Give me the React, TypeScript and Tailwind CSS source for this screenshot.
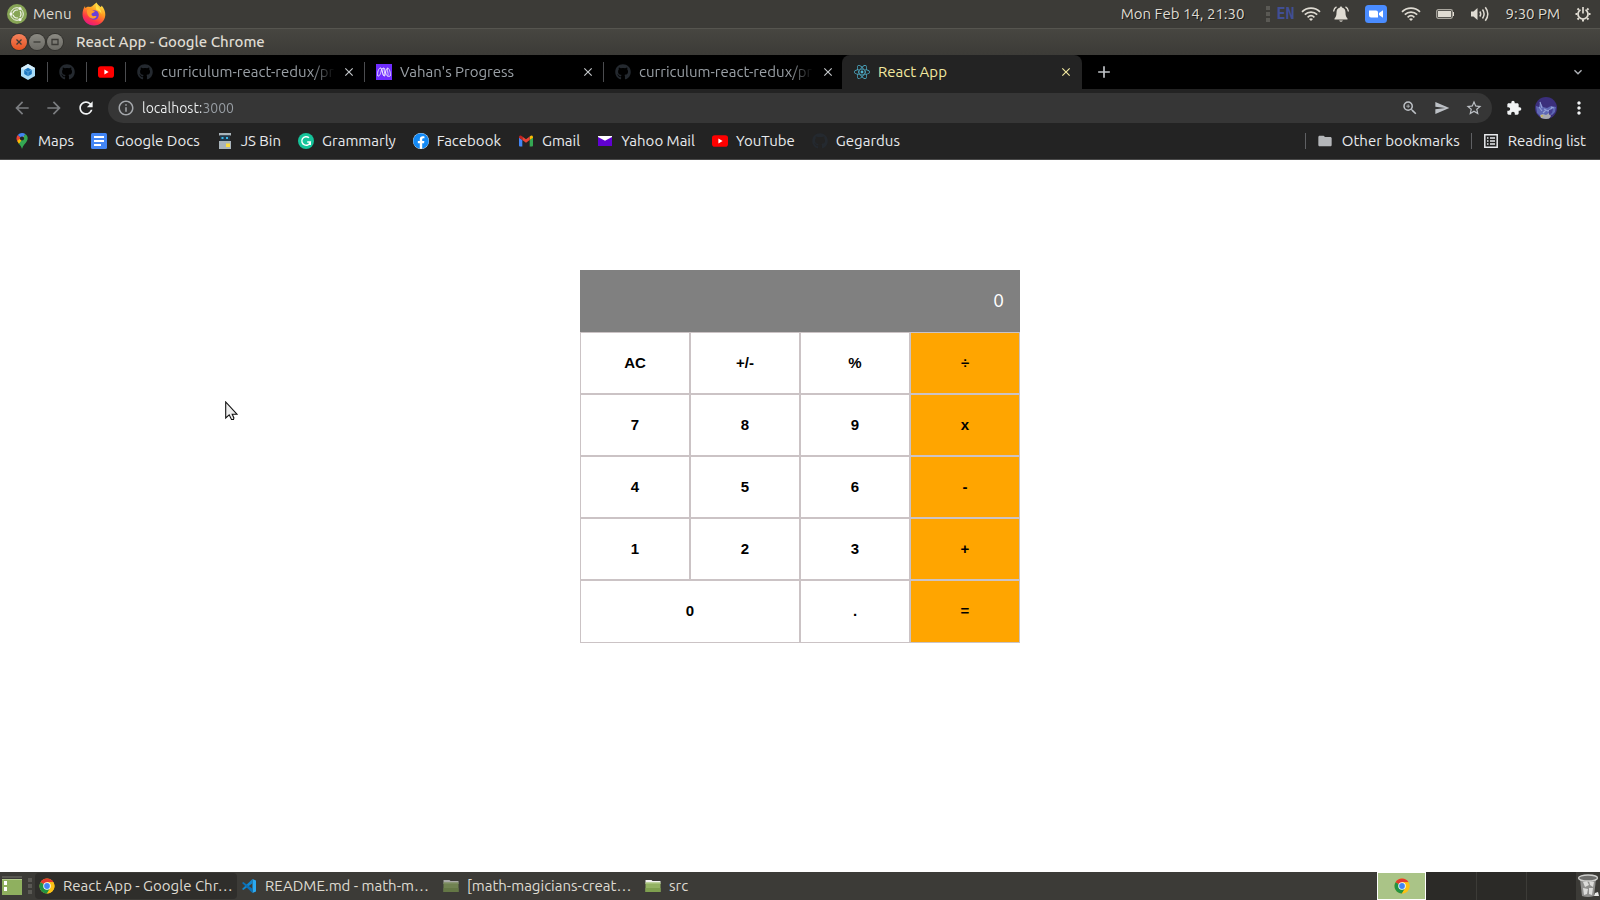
import React from 'react';
import { FaGithub, FaReact, FaFacebook } from 'react-icons/fa';
import {
  MdArrowBack, MdArrowForward, MdRefresh, MdInfoOutline, MdZoomIn, MdSend,
  MdStarBorder, MdExtension, MdMoreVert, MdFolder, MdClose, MdAdd, MdExpandMore,
} from 'react-icons/md';

const shadow = '[text-shadow:1px_1px_0_rgba(0,0,0,0.6)]';

/* ---------- icons ---------- */

function UbuntuLogo() {
  return (
    <svg viewBox="0 0 20 20" className="size-5 shrink-0">
      <circle cx="10" cy="10" r="10" fill="#87a556" />
      <circle cx="10" cy="10" r="6.3" fill="none" stroke="#f4f6ee" strokeWidth="1" />
      <circle cx="10" cy="10" r="4" fill="none" stroke="#f4f6ee" strokeWidth="1.2" />
      <g stroke="#87a556" strokeWidth="1.6">
        <path d="M10 10H2M10 10l4-7M10 10l4 7" />
      </g>
      <g fill="#f4f6ee">
        <circle cx="4" cy="10" r="1.5" />
        <circle cx="13" cy="4.6" r="1.5" />
        <circle cx="13" cy="15.4" r="1.5" />
      </g>
    </svg>
  );
}

function FirefoxLogo() {
  return (
    <svg viewBox="0 0 24 24" className="size-6 shrink-0">
      <defs>
        <linearGradient id="ff" x1="0.8" y1="0" x2="0.3" y2="1">
          <stop offset="0" stopColor="#fff44f" />
          <stop offset="0.4" stopColor="#ff9a1f" />
          <stop offset="0.75" stopColor="#ff3647" />
          <stop offset="1" stopColor="#e31587" />
        </linearGradient>
      </defs>
      <path d="M14.5 0.5c.5 2 3 3 4 4.500c1-.3 1-1 1-1.500c2.500 2.500 4 6 3.800 9.500C23 19 18 23.500 12 23.500S.5 19 .5 12.500C.5 9 1.500 6 3 4c0 1 .2 1.500.5 2C5 4.500 6.500 4.500 8 5c2.500-.2 3-2 6.500-4.500z" fill="url(#ff)" />
      <circle cx="12" cy="13" r="4.800" fill="#6a3fd8" />
      <path d="M5 8c2-1.500 4-1.200 5.500.2L13 9.500c-1 1.500-3 1-3.500 2.500-.2 1.500 1.500 2.500 3 2 1-.3 2.500 0 2 .8-1.500 2.500-5 2.500-7 .5C5.500 13.500 4.500 10.500 5 8z" fill="#ff9a2a" />
      <path d="M15 2c0 3 4.500 4.500 4.500 10-1-2-2.500-3.500-5-4-1-2-.8-4 .5-6z" fill="#ffe14a" />
    </svg>
  );
}

function WindowButton({ kind }: { kind: 'close' | 'min' | 'max' }) {
  const tone = kind === 'close' ? 'from-[#f4825c] to-[#e4531f]' : 'from-[#8b8a83] to-[#6c6b65]';
  return (
    <button type="button" aria-label={kind} className={`grid size-4 place-items-center rounded-full bg-linear-to-b shadow-[0_0_0_1px_#33322e] ${tone}`}>
      <svg viewBox="0 0 16 16" className="size-4" fill="none" stroke="#3c3b37" strokeWidth="1.3">
        {kind === 'close' && <path d="M5.500 5.500l5 5M10.500 5.500l-5 5" />}
        {kind === 'min' && <path d="M4.500 8h7" />}
        {kind === 'max' && <path d="M5 5.500h6v5h-6z" />}
      </svg>
    </button>
  );
}

function WebpackLogo() {
  return (
    <svg viewBox="0 0 16 16" className="size-4 shrink-0">
      <path d="M8 0l7 4v8l-7 4-7-4V4z" fill="#a9dcf7" />
      <path d="M8 0l7 4-7 4-7-4z" fill="#d5eefb" />
      <path d="M8 3.800l3.800 2.100v4.200L8 12.200l-3.800-2.100V5.900z" fill="#1d78c1" />
      <path d="M4.200 5.900L8 8l3.800-2.100M8 8v4.200" stroke="#7fc0ea" strokeWidth=".6" fill="none" />
    </svg>
  );
}

function MicroverseLogo() {
  return (
    <svg viewBox="0 0 16 16" className="size-4 shrink-0">
      <path d="M0 0h16v16H0z" fill="#6f2cff" />
      <path
        d="M1.800 12C1 9 2.500 4 4.500 4S6.500 12 8.300 12 7 4 8 4 9.800 12 11.500 12 10.500 4 11.800 4 15 9 14.200 12M1.800 12C3.500 12.500 4.500 10 5 7.500S6.500 4 8 4M8.300 12C6.500 12 6 4 4.500 4M8.300 12C9.500 11 9.800 4 11.800 4M11.500 12C12.300 12.600 13.800 12.500 14.200 12"
        fill="none"
        stroke="#eee6ff"
        strokeWidth=".9"
      />
    </svg>
  );
}

function YoutubeLogo() {
  return (
    <svg viewBox="0 0 16 16" className="size-4 shrink-0">
      <rect x="0" y="2.300" width="16" height="11.400" rx="2.800" fill="#f00" />
      <path d="M6.400 5.600L10.600 8l-4.200 2.400z" fill="#fff" />
    </svg>
  );
}

function MapsLogo() {
  return (
    <svg viewBox="0 0 16 16" className="size-4 shrink-0">
      <path d="M3.800 2A5.500 5.500 0 0 0 3.400 8.400L8 5.700z" fill="#ea4335" />
      <path d="M3.200 8l7-6 .5 4L5 11z" fill="#fbbc04" />
      <path d="M11.300 1a5.500 5.500 0 0 1 1.500 7.200C11.500 10.500 9 12 8 16c-.7-2.500-1.800-3.700-3-5z" fill="#34a853" />
      <path d="M11.300 1A5.500 5.500 0 0 0 8 0a5.500 5.500 0 0 0-4.200 2L8 5.700z" fill="#4285f4" />
      <circle cx="8" cy="5.500" r="2.100" fill="#232323" />
    </svg>
  );
}

function DocsLogo() {
  return (
    <svg viewBox="0 0 16 16" className="size-4 shrink-0">
      <rect width="16" height="16" rx="1.500" fill="#4285f4" />
      <path d="M3 4h10M3 8h10M3 12h7" stroke="#fff" strokeWidth="1.800" />
    </svg>
  );
}

function JsBinLogo() {
  return (
    <svg viewBox="0 0 16 16" className="size-4 shrink-0">
      <path d="M2 0h12v2.500H2zM2 8h12v8H2z" fill="#a9b4bb" />
      <path d="M3 2.500h10v5.500H3z" fill="#20384a" />
      <path d="M4.500 4h2v2h-2zM9 4h2v2H9z" fill="#39b7ea" />
      <path d="M9 10.500h4V14H9z" fill="#fbdc3c" />
    </svg>
  );
}

function GrammarlyLogo() {
  return (
    <svg viewBox="0 0 16 16" className="size-4 shrink-0">
      <circle cx="8" cy="8" r="8" fill="#15c39a" />
      <path d="M11 4.800A4.300 4.300 0 1 0 12.300 9H9.200M12.300 9v3" fill="none" stroke="#fff" strokeWidth="1.400" />
    </svg>
  );
}

function FacebookLogo() {
  return (
    <span className="grid size-4 shrink-0 place-items-center rounded-full bg-white">
      <FaFacebook className="size-4 text-[#1289f5]" />
    </span>
  );
}

function GmailLogo() {
  return (
    <svg viewBox="0 0 16 16" className="size-4 shrink-0">
      <path d="M1 4.500v8q0 1 1 1h2.300V7z" fill="#4285f4" />
      <path d="M15 4.500v8q0 1-1 1h-2.300V7z" fill="#34a853" />
      <path d="M11.700 3.500V7L15 4.700V4q-.5-2-2.200-1.300z" fill="#fbbc04" />
      <path d="M4.300 7V3.500L8 6.300l3.700-2.800V7L8 9.800z" fill="#ea4335" />
      <path d="M1 4v.7L4.300 7V3.500l-1.100-.8Q1.500 2 1 4z" fill="#c5221f" />
    </svg>
  );
}

function YahooMailLogo() {
  return (
    <svg viewBox="0 0 16 16" className="size-4 shrink-0">
      <path d="M1 3h14v10H1z" fill="#6001d2" />
      <path d="M1 3h14v1L8 7.800 1 4z" fill="#fff" />
    </svg>
  );
}

function GithubDark() {
  return <FaGithub className="size-4 shrink-0 text-[#24292f]" />;
}

function ReadingListIcon() {
  return (
    <svg viewBox="0 0 16 16" className="size-4 shrink-0" fill="none" stroke="#e8eaed">
      <path d="M1.800 1.800h12.400v12.400H1.800z" strokeWidth="1.500" />
      <path d="M4 5h1.500M4 8h1.500M4 11h1.500M7 5h5M7 8h5M7 11h5" strokeWidth="1.500" />
    </svg>
  );
}

function ChromeLogo() {
  return (
    <svg viewBox="0 0 16 16" className="size-4 shrink-0">
      <circle cx="8" cy="8" r="7.500" fill="#fbc116" />
      <path d="M8 8L1.500 4.250A7.500 7.500 0 0 1 14.500 4.250H8z" fill="#e33b2e" />
      <path d="M1.500 4.250A7.500 7.500 0 0 0 8 15.500L11.250 9.900 8 8z" fill="#229342" />
      <path d="M8 4.250h6.500A7.500 7.500 0 0 1 8 15.500l3.250-5.600z" fill="#fbc116" />
      <circle cx="8" cy="8" r="3.750" fill="#fff" />
      <circle cx="8" cy="8" r="2.900" fill="#4285f4" />
    </svg>
  );
}

function VsCodeLogo() {
  return (
    <svg viewBox="0 0 16 16" className="size-4 shrink-0">
      <path d="M11.500 1L15 2.600v10.800L11.500 15z" fill="#2aa9f2" />
      <path d="M11.500 1v4.200L2.300 12 1 10.900 11.500 1z" fill="#1286cf" />
      <path d="M11.500 15v-4.200L2.300 4 1 5.100 11.500 15z" fill="#0a72ba" />
    </svg>
  );
}

function FolderIcon({ dim }: { dim?: boolean }) {
  return (
    <svg viewBox="0 0 16 16" className={dim ? 'size-4 shrink-0 opacity-60' : 'size-4 shrink-0'}>
      <path d="M.5 2h6l1 1h8v3H.5z" fill="#f2f2f0" />
      <path d="M.5 4.500h15V14H.5z" fill="#93b263" />
      <path d="M.5 10h15v4H.5z" fill="#7fa04f" />
      <path d="M1 5h14" stroke="#b9d092" />
    </svg>
  );
}

function WifiIcon() {
  return (
    <svg viewBox="0 0 20 16" className="h-4 w-5 shrink-0" fill="none" stroke="#dfdbd2" strokeWidth="1.700">
      <path d="M1 5.800C6 1 14 1 19 5.800M3.800 8.600c3.500-3.300 8.900-3.300 12.400 0M6.600 11.300c2-1.900 4.800-1.900 6.800 0" />
      <path d="M8 13q2-1.500 4 0l-2 2z" fill="#dfdbd2" stroke="none" />
    </svg>
  );
}

function BellIcon() {
  return (
    <svg viewBox="0 0 16 16" className="size-4 shrink-0" fill="#dfdbd2">
      <path d="M8 .5c.8 0 1 .5 1 1 2.500.5 3.500 2.500 3.500 5 0 3 .5 4.500 2 6v1h-13v-1c1.500-1.500 2-3 2-6 0-2.500 1-4.500 3.500-5 0-.5.2-1 1-1zM6 14.500h4q-2 2.500-4 0z" />
      <path d="M3.500.8Q1 2 .6 5.500M12.500.8Q15 2 15.400 5.500" fill="none" stroke="#dfdbd2" strokeWidth="1.300" />
    </svg>
  );
}

function ZoomAppIcon() {
  return (
    <svg viewBox="0 0 22 18" className="h-[18px] w-[22px] shrink-0">
      <rect width="22" height="18" rx="3.500" fill="#4a8cff" />
      <path d="M4 5.500h7q2 0 2 2v5H6q-2 0-2-2zM14 8l4-2.700v7.400L14 10z" fill="#fff" />
    </svg>
  );
}

function BatteryIcon() {
  return (
    <svg viewBox="0 0 18 12" className="h-3 w-[18px] shrink-0">
      <rect x=".7" y="1.700" width="15.600" height="8.600" rx="1.500" fill="none" stroke="#a9a69e" strokeWidth="1.300" />
      <path d="M2 3h13v6H2zM17 4h1v4h-1z" fill="#dfdbd2" />
    </svg>
  );
}

function VolumeIcon() {
  return (
    <svg viewBox="0 0 20 16" className="h-4 w-5 shrink-0" fill="none" stroke="#dfdbd2" strokeWidth="1.500">
      <path d="M1 5.500h2.500L7.500 2v12l-4-3.500H1z" fill="#dfdbd2" stroke="none" />
      <path d="M9.800 5.500q1.800 2.500 0 5M12.500 3.500q3.200 4.500 0 9M15.300 1.300q5 6.700 0 13.400" />
    </svg>
  );
}

function PowerGear() {
  return (
    <svg viewBox="0 0 16 16" className="size-4 shrink-0" fill="none" stroke="#dfdbd2">
      <path d="M5.500 3.700a5 5 0 1 0 5 0" strokeWidth="1.700" />
      <path d="M8 1v6.500" strokeWidth="1.700" />
      <path d="M3.900 3.900L2.500 2.500M12.100 3.900l1.400-1.400M2.500 8H.5M13.500 8h2M3.900 12.100l-1.400 1.400M12.100 12.100l1.400 1.400M8 13.500v2" strokeWidth="2" />
    </svg>
  );
}

function TrashIcon() {
  return (
    <svg viewBox="0 0 22 24" className="h-6 w-[22px] shrink-0">
      <path d="M3 5h16l-2 17q-6 2-12 0z" fill="#8f8f8d" />
      <path d="M6 8l4-1 2 4-4 2zM12 7l5 1-1 5-3-2zM6 14l5 1-1 5-3 1zM12 14l4 0-1 7-3-1z" fill="#dcdcda" />
      <ellipse cx="11" cy="4" rx="9.500" ry="3" fill="#6e6e6c" stroke="#cfcfcd" strokeWidth="1.300" />
      <path d="M18 19l3-1 1 4h-5z" fill="#e8e8e6" />
    </svg>
  );
}

function Avatar() {
  return (
    <svg viewBox="0 0 22 22" className="size-[22px] shrink-0">
      <defs>
        <clipPath id="avatar"><circle cx="11" cy="11" r="11" /></clipPath>
      </defs>
      <g clipPath="url(#avatar)">
        <path d="M0 0h22v22H0z" fill="#3b2f7c" />
        <path d="M1 9l3 1 1-5 3 5 4 1 4-2 5 1-1 5-3 3-4-1-3 2-5 0-3-3z" fill="#5f68b4" />
        <path d="M5 5l2 6M4 10l3 4M9 12l4 2 4-3M8 16l3-3M16 10l3 1" fill="none" stroke="#93a0d8" strokeWidth="1.100" />
        <path d="M5 18l3-1 3 1 3-2 2 3-2 3H6z" fill="#a9abb0" />
        <path d="M6 18h2v2H6z" fill="#c5b465" />
        <path d="M14 13l4-1-1 4-3 2z" fill="#453f92" />
      </g>
    </svg>
  );
}

/* ---------- desktop panels ---------- */

function TopPanel() {
  return (
    <header className={`flex h-7 items-center bg-[#3c3b37] pl-[7px] pr-[9px] text-[15px] text-[#dfdbd2] ${shadow}`}>
      <button type="button" className="flex items-center gap-[6px]">
        <UbuntuLogo />
        Menu
      </button>
      <button type="button" aria-label="Firefox" className="ml-[11px]"><FirefoxLogo /></button>
      <span className="ml-auto">Mon Feb 14, 21:30</span>
      <span className="ml-[22px] mr-[6px] h-4 w-1 bg-[repeating-linear-gradient(#5a5954_0_4px,transparent_4px_6px)]" />
      <span className="w-[25px] font-['DejaVu_Sans_Mono',monospace] text-[15px] font-bold text-[#414f94] [text-shadow:none]">EN</span>
      <WifiIcon />
      <span className="ml-3"><BellIcon /></span>
      <span className="ml-4"><ZoomAppIcon /></span>
      <span className="ml-[14px]"><WifiIcon /></span>
      <span className="ml-[15px]"><BatteryIcon /></span>
      <span className="ml-4"><VolumeIcon /></span>
      <span className="mx-[15px]">9:30 PM</span>
      <PowerGear />
    </header>
  );
}

function TitleBar() {
  return (
    <div className="flex h-[27px] items-center gap-[2px] border-t border-[#56554f] bg-linear-to-b from-[#474641] to-[#3c3b37] pl-[11px]">
      <WindowButton kind="close" />
      <WindowButton kind="min" />
      <WindowButton kind="max" />
      <span className="ml-[11px] text-[15px] font-medium text-[#dfdbd2]">React App - Google Chrome</span>
    </div>
  );
}

/* ---------- browser chrome ---------- */

function PinnedTab({ label, children }: { label: string; children: React.ReactNode }) {
  return (
    <button type="button" aria-label={label} className="grid h-5 w-[39px] place-items-center border-r border-[#4b4c4f]">
      {children}
    </button>
  );
}

function Tab({ icon, title, last }: { icon: React.ReactNode; title: string; last?: boolean }) {
  return (
    <div className={`flex h-5 w-[239px] items-center pl-[11px] pr-2 ${last ? '' : 'border-r border-[#4b4c4f]'}`}>
      {icon}
      <span className="ml-2 w-[174px] overflow-hidden whitespace-nowrap text-[15px] leading-5 text-[#9aa0a6] [mask-image:linear-gradient(to_right,#000_150px,transparent)]">{title}</span>
      <button type="button" aria-label="Close tab" className="ml-auto"><MdClose className="size-[14px] text-[#c4c7ca]" /></button>
    </div>
  );
}

function TabStrip() {
  return (
    <div className="flex h-[34px] items-center bg-black pl-[9px]">
      <PinnedTab label="webpack"><WebpackLogo /></PinnedTab>
      <PinnedTab label="GitHub"><GithubDark /></PinnedTab>
      <PinnedTab label="YouTube"><YoutubeLogo /></PinnedTab>
      <Tab icon={<GithubDark />} title="curriculum-react-redux/pr" />
      <Tab icon={<MicroverseLogo />} title="Vahan's Progress" />
      <Tab icon={<GithubDark />} title="curriculum-react-redux/pr" last />
      <div className="-ml-px flex h-full w-[240px] items-center rounded-t-lg bg-[#232323] pl-3 pr-[9px]">
        <FaReact className="size-4 text-[#4fb3cf]" />
        <span className="ml-2 text-[15px] text-[#f2e9a0]">React App</span>
        <button type="button" aria-label="Close tab" className="ml-auto"><MdClose className="size-[14px] text-[#f2e9a0]" /></button>
      </div>
      <button type="button" aria-label="New tab" className="ml-3"><MdAdd className="size-5 text-[#c0c3c7]" /></button>
      <button type="button" aria-label="Search tabs" className="ml-auto mr-[14px]"><MdExpandMore className="size-4 text-[#b0b3b8]" /></button>
    </div>
  );
}

function Toolbar() {
  return (
    <div className="flex h-[38px] items-center bg-[#232323] pl-3 pr-[11px] text-[#f1f3f4]">
      <button type="button" aria-label="Back"><MdArrowBack className="size-5 text-[#7b7d80]" /></button>
      <button type="button" aria-label="Forward" className="ml-3"><MdArrowForward className="size-5 text-[#7b7d80]" /></button>
      <button type="button" aria-label="Reload" className="ml-3"><MdRefresh className="size-5" /></button>
      <div className="ml-3 flex h-[30px] flex-1 items-center gap-[15px] rounded-full bg-[#363636] px-[9px] text-[#bdc1c6]">
        <MdInfoOutline className="-mr-2 size-[18px] text-[#a4a7ab]" />
        <input
          type="text"
          aria-label="Address"
          defaultValue="localhost:3000"
          className="min-w-0 flex-1 bg-[linear-gradient(to_right,#f1f3f4_59px,#9aa0a6_59px)] bg-clip-text text-sm text-transparent outline-none"
        />
        <button type="button" aria-label="Zoom"><MdZoomIn className="size-[18px]" /></button>
        <button type="button" aria-label="Send"><MdSend className="size-4" /></button>
        <button type="button" aria-label="Bookmark"><MdStarBorder className="size-[18px]" /></button>
      </div>
      <button type="button" aria-label="Extensions" className="ml-[14px]"><MdExtension className="size-4" /></button>
      <button type="button" aria-label="Profile" className="ml-[13px]"><Avatar /></button>
      <button type="button" aria-label="More" className="ml-3"><MdMoreVert className="size-5" /></button>
    </div>
  );
}

const bookmarks = [
  { name: 'Maps', Icon: MapsLogo },
  { name: 'Google Docs', Icon: DocsLogo },
  { name: 'JS Bin', Icon: JsBinLogo },
  { name: 'Grammarly', Icon: GrammarlyLogo },
  { name: 'Facebook', Icon: FacebookLogo },
  { name: 'Gmail', Icon: GmailLogo },
  { name: 'Yahoo Mail', Icon: YahooMailLogo },
  { name: 'YouTube', Icon: YoutubeLogo },
  { name: 'Gegardus', Icon: GithubDark },
];

function BookmarksBar() {
  return (
    <nav className="flex h-[33px] items-center gap-[17px] border-b border-[#4a4a4a] bg-[#232323] px-[14px] pb-1 text-[15px] text-[#e8eaed]">
      {bookmarks.map(({ name, Icon }) => (
        <a key={name} href="#" className="flex items-center gap-2 whitespace-nowrap">
          <Icon />
          {name}
        </a>
      ))}
      <div className="ml-auto flex items-center gap-[11px] whitespace-nowrap">
        <span className="h-4 w-px bg-[#5f6063]" />
        <a href="#" className="flex items-center gap-[9px]"><MdFolder className="size-4 text-[#b4b6b9]" />Other bookmarks</a>
        <span className="h-4 w-px bg-[#5f6063]" />
        <a href="#" className="flex items-center gap-[9px]"><ReadingListIcon />Reading list</a>
      </div>
    </nav>
  );
}

/* ---------- calculator page ---------- */

const keys = ['AC', '+/-', '%', '÷', '7', '8', '9', 'x', '4', '5', '6', '-', '1', '2', '3', '+', '0', '.', '='];
const operators = ['÷', 'x', '-', '+', '='];

function Calculator() {
  return (
    <section aria-label="Calculator" className="grid w-[440px] grid-cols-4 grid-rows-[repeat(5,62px)_63px]">
      <output className="col-span-4 flex items-center justify-end bg-[#808080] pb-[2px] pr-4 text-[19px] text-white">0</output>
      {keys.map((key) => (
        <button
          key={key}
          type="button"
          className={`border border-[#cbc3c5] font-['Liberation_Sans',Arial,sans-serif] text-[15px] font-bold text-black ${operators.includes(key) ? 'bg-[#ffa500]' : 'bg-white'} ${key === '0' ? 'col-span-2' : ''}`}
        >
          {key}
        </button>
      ))}
    </section>
  );
}

function Pointer() {
  return (
    <svg viewBox="0 0 13 20" className="pointer-events-none absolute left-[225px] top-[241px] h-5 w-[13px]">
      <path d="M.7 1v16l3.500-3.200 2.300 4.700h2l.4-1.600-1.700-3.700h4.700z" fill="#eee" stroke="#111" strokeWidth="1.100" />
    </svg>
  );
}

/* ---------- taskbar ---------- */

function Task({ icon, title, active }: { icon: React.ReactNode; title: string; active?: boolean }) {
  return (
    <button type="button" className={`flex h-[26px] w-[202px] items-center gap-2 whitespace-nowrap rounded-sm pl-1 text-[15px] ${active ? 'bg-[#2f2e2b]' : ''}`}>
      {icon}
      {title}
    </button>
  );
}

function Taskbar() {
  return (
    <footer className={`flex h-7 items-center bg-[#3c3b37] text-[#dfdbd2] ${shadow}`}>
      <button type="button" aria-label="Show desktop" className="ml-[2px]">
        <svg viewBox="0 0 21 20" className="h-5 w-[21px]">
          <path d="M0 1h20" stroke="#77766f" />
          <path d="M0 3h20v16H0z" fill="#8fb05f" />
          <path d="M0 3.500h20" stroke="#b4cc8c" />
          <path d="M2 5h3v4H2zM2 11h3v4H2z" fill="#fff" />
        </svg>
      </button>
      <span className="ml-[5px] mr-[3px] h-4 w-1 bg-[repeating-linear-gradient(#5a5954_0_4px,transparent_4px_6px)]" />
      <Task active icon={<ChromeLogo />} title="React App - Google Chr…" />
      <Task icon={<VsCodeLogo />} title="README.md - math-m…" />
      <Task icon={<FolderIcon dim />} title="[math-magicians-creat…" />
      <Task icon={<FolderIcon />} title="src" />
      <div className="ml-auto flex h-7 bg-[#2b2a27]">
        <div className="mr-px grid w-[49px] place-items-center border border-white bg-[#aac487]"><ChromeLogo /></div>
        <div className="w-[50px] border-r border-[#3c3b37]" />
        <div className="w-[50px] border-r border-[#3c3b37]" />
        <div className="w-[49px]" />
      </div>
      <button type="button" aria-label="Trash" className="mx-px"><TrashIcon /></button>
    </footer>
  );
}

export default function App() {
  return (
    <div className="flex min-h-screen flex-col bg-white font-[Ubuntu,'Noto_Sans',sans-serif]">
      <TopPanel />
      <TitleBar />
      <TabStrip />
      <Toolbar />
      <BookmarksBar />
      <main className="relative flex flex-1 items-start justify-center pt-[110px]">
        <Calculator />
        <Pointer />
      </main>
      <Taskbar />
    </div>
  );
}
